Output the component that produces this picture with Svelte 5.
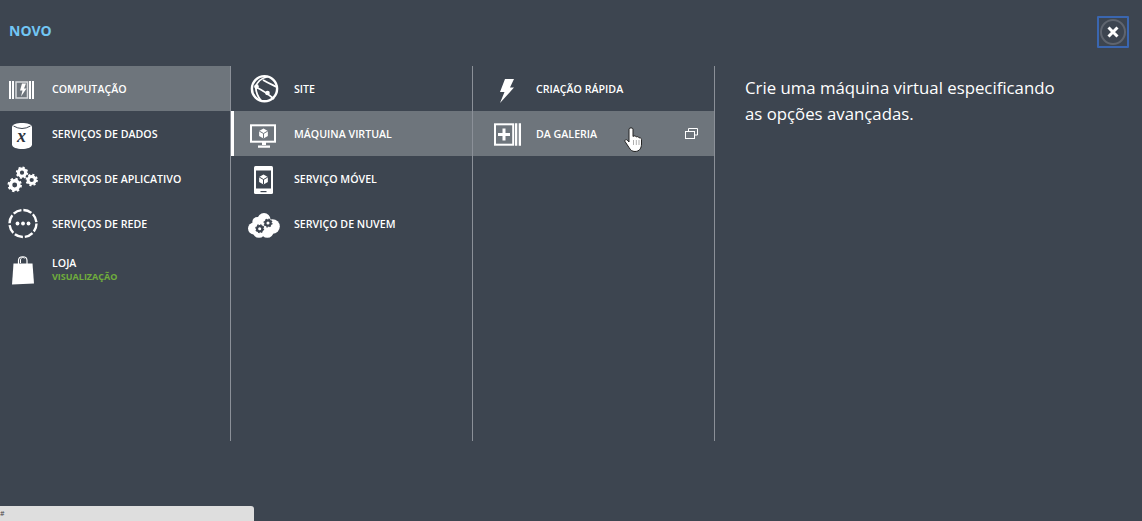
<script>
  const primary = [
    { icon: 'compute', label: 'COMPUTAÇÃO', active: true },
    { icon: 'data', label: 'SERVIÇOS DE DADOS' },
    { icon: 'gears', label: 'SERVIÇOS DE APLICATIVO' },
    { icon: 'network', label: 'SERVIÇOS DE REDE' },
    { icon: 'bag', label: 'LOJA', sub: 'VISUALIZAÇÃO' }
  ];
  const secondary = [
    { icon: 'globe', label: 'SITE' },
    { icon: 'monitor', label: 'MÁQUINA VIRTUAL', active: true },
    { icon: 'mobile', label: 'SERVIÇO MÓVEL' },
    { icon: 'cloud', label: 'SERVIÇO DE NUVEM' }
  ];
  const tertiary = [
    { icon: 'bolt', label: 'CRIAÇÃO RÁPIDA' },
    { icon: 'gallery', label: 'DA GALERIA', active: true, external: true }
  ];
</script>

{#snippet gear(x, y, r, color)}
  <circle cx={x} cy={y} r={r * 0.6} fill="none" stroke={color} stroke-width={r * 0.5} />
  <circle cx={x} cy={y} r={r * 0.88} fill="none" stroke={color} stroke-width={r * 0.3} stroke-dasharray={r * 0.345} />
{/snippet}

{#snippet cube(x, y, r, color, line)}
  <path d="M{x} {y - r}L{x + r * 0.87} {y - r / 2}V{y + r / 2}L{x} {y + r}L{x - r * 0.87} {y + r / 2}V{y - r / 2}Z" fill={color} />
  <path d="M{x - r * 0.87} {y - r / 2}L{x} {y}L{x + r * 0.87} {y - r / 2}M{x} {y}V{y + r}" fill="none" stroke={line} stroke-width="1" />
{/snippet}

{#snippet icon(name)}
  <svg class="icon" viewBox="0 0 44 45" width="44" height="45">
    {#if name === 'compute'}
      <path d="M9 15h2v18H9zM12 15h2v18h-2zM29 15h2v18h-2zM32 15h2v18h-2z" fill="#fff" />
      <rect x="16" y="16" width="11.5" height="16" fill="none" stroke="#d8dadd" stroke-width="1.5" />
      <path d="M22 17.5h4l-2 5h2.5l-5.5 8 1.500-6h-2.500z" fill="#fff" />
    {:else if name === 'data'}
      <path d="M12 16C12 10.500 32 10.500 32 16V33.500C32 39.500 12 39.500 12 33.500Z" fill="#fff" />
      <path d="M13.500 15Q22 20 30.500 15" fill="none" stroke="#3d4550" stroke-width="1" />
      <text class="x-glyph" x="21.500" y="31" text-anchor="middle">x</text>
    {:else if name === 'gears'}
      {@render gear(14.7, 29, 7, '#fff')}
      {@render gear(22, 16.7, 6, '#fff')}
      {@render gear(31.7, 24, 6, '#fff')}
    {:else if name === 'network'}
      <circle cx="23" cy="22.500" r="13.500" fill="none" stroke="#fff" stroke-width="2.400" stroke-dasharray="8.600 2" />
      <circle cx="17.500" cy="22.500" r="1.900" fill="#fff" />
      <circle cx="23" cy="22.500" r="1.900" fill="#fff" />
      <circle cx="28.500" cy="22.500" r="1.900" fill="#fff" />
    {:else if name === 'bag'}
      <path d="M13.500 17.500H32.500L34 37.500L12 38.500Z" fill="#fff" />
      <path d="M18.500 20V14.500C18.500 9.500 27 9.500 27 14.500V20" fill="none" stroke="#fff" stroke-width="1.200" />
      <path d="M20.500 17V14C20.500 11 24 11 24.500 12.500" fill="none" stroke="#fff" stroke-width="1" />
    {:else if name === 'globe'}
      <circle cx="22.500" cy="22.700" r="12.600" fill="none" stroke="#fff" stroke-width="2.400" />
      <path d="M26 10.500C20 12 15 16 13.700 21C14 26 16 31 19 34.500M13.700 21C18 23 23 25.500 32 33M21 14C26 17 31 19 35 21" fill="none" stroke="#fff" stroke-width="1.800" />
      <circle cx="14.500" cy="20.500" r="2.300" fill="#fff" />
      <circle cx="25.500" cy="27" r="2.300" fill="#fff" />
    {:else if name === 'monitor'}
      <rect x="9" y="14.300" width="24" height="16.400" fill="none" stroke="#fff" stroke-width="2" />
      <path d="M20 31h4v3h-4zM16 34.500h12v2.200H16z" fill="#fff" />
      {@render cube(21.5, 22.5, 5, '#fff', '#6e757c')}
    {:else if name === 'mobile'}
      <rect x="12" y="10" width="19" height="28" rx="1.500" fill="#fff" />
      <rect x="14" y="14.500" width="15" height="18" fill="#3d4550" />
      <rect x="18.500" y="35" width="6" height="1.200" fill="#3d4550" />
      {@render cube(21.5, 23.5, 5, '#fff', '#3d4550')}
    {:else if name === 'cloud'}
      <g fill="#fff">
        <circle cx="22" cy="18.500" r="6.500" />
        <circle cx="15.300" cy="21" r="5" />
        <circle cx="12" cy="27.500" r="6" />
        <circle cx="30.500" cy="25.500" r="7.300" />
        <circle cx="17" cy="30.500" r="6.300" />
        <circle cx="25.300" cy="30.500" r="6.300" />
      </g>
      {@render gear(17.7, 27.7, 4.4, '#3d4550')}
      {@render gear(26, 22, 4.4, '#3d4550')}
    {:else if name === 'bolt'}
      <path d="M21 13H30L26 21.500H30L16 37L20.500 26H16Z" fill="#fff" />
    {:else if name === 'gallery'}
      <rect x="11" y="13.300" width="18.200" height="20.400" fill="none" stroke="#fff" stroke-width="2" />
      <path d="M18.500 17.500h3v4.500h4.500v3h-4.500v4.500h-3v-4.500h-4.500v-3h4.500z" fill="#fff" />
      <path d="M31 12.300h2.300v22.400H31zM34.700 12.300H37v22.400h-2.300z" fill="#fff" />
    {/if}
  </svg>
{/snippet}

{#snippet row(item)}
  <div class="row" class:row--active={item.active}>
    {@render icon(item.icon)}
    <div class="row__text">
      <span class="row__label">{item.label}</span>
      {#if item.sub}<span class="row__sub">{item.sub}</span>{/if}
    </div>
    {#if item.external}
      <svg class="external" viewBox="0 0 13 11" width="13" height="11">
        <path d="M3.500 3V.5h9v6.500H9.500" fill="none" stroke="#fff" />
        <rect x=".5" y="3.500" width="9" height="7" fill="none" stroke="#fff" />
      </svg>
    {/if}
  </div>
{/snippet}

<div class="wizard">
  <header class="wizard__head">
    <h1 class="wizard__title">NOVO</h1>
    <button class="close" aria-label="Fechar">
      <svg viewBox="0 0 26 26" width="26" height="26">
        <circle cx="13" cy="13" r="12" fill="none" stroke="#5f656f" stroke-width="2" />
        <path d="M8.500 8.500l9 9M17.500 8.500l-9 9" stroke="#fff" stroke-width="3" />
      </svg>
    </button>
  </header>

  <div class="cols">
    <nav class="col col--primary">
      {#each primary as item}{@render row(item)}{/each}
    </nav>
    <nav class="col col--inner">
      {#each secondary as item}{@render row(item)}{/each}
    </nav>
    <nav class="col col--inner">
      {#each tertiary as item}{@render row(item)}{/each}
    </nav>
    <p class="desc">Crie uma máquina virtual especificando as opções avançadas.</p>
  </div>

  <!-- mouse pointer in the shot -->
  <svg class="pointer" viewBox="0 0 18 25" width="18" height="25">
    <path d="M5 2C5 .5 9 .5 9 2V9.500C10 8.500 12 8.500 12.300 10C13 9.300 15 9.500 15.200 11C16 10.500 17.500 11 17.500 12.500V17C17.500 21 15.500 24.500 11 24.500C8 24.500 6.500 23 5 20.500L1 14.500C.5 13 2 12 3.200 13L5 15Z" fill="#fff" stroke="#222" stroke-width="1" stroke-linejoin="round" />
    <path d="M9.500 13v5M12.300 13v5M15 13v5" stroke="#777" stroke-width=".6" />
  </svg>

  <div class="status"><span>#</span></div>
</div>

<style>
  :global(body) {
    margin: 0;
    background: #3d4550;
  }

  .wizard {
    position: relative;
    height: 521px;
    overflow: hidden;
    background: #3d4550;
    color: #fff;
    font-family: "Open Sans", "Noto Sans", sans-serif;
  }

  .wizard__head {
    height: 66px;
    display: flex;
    align-items: flex-start;
    justify-content: space-between;
    padding: 16px 13px 0 9px;
    box-sizing: border-box;
  }

  .wizard__title {
    margin: 7px 0 0;
    font-size: 14px;
    line-height: 16px;
    font-weight: 700;
    color: #72c6f5;
  }

  .close {
    width: 32px;
    height: 32px;
    padding: 0;
    display: flex;
    align-items: center;
    justify-content: center;
    background: none;
    border: 2px solid #3a66b0;
    border-radius: 1px;
    box-sizing: border-box;
  }

  .cols {
    display: flex;
    height: 375px;
  }

  .col {
    flex: none;
    width: 242px;
    box-sizing: border-box;
    border-right: 1px solid #8b9098;
  }

  .col--primary { width: 231px; }
  .col--inner .row { padding-left: 11px; }
  .col--inner .row--active { box-shadow: inset 3px 0 0 #fff; }
  .col--inner + .col--inner .row--active { box-shadow: none; }

  .row {
    height: 45px;
    display: flex;
    align-items: center;
    padding-right: 16px;
    box-sizing: border-box;
  }

  .row--active { background: #6e757c; }

  .icon {
    flex: none;
    margin-right: 8px;
  }

  .x-glyph {
    font-family: "Liberation Serif", serif;
    font-style: italic;
    font-weight: 700;
    font-size: 18px;
    fill: #2d333d;
  }

  .row__text {
    flex: 1;
    display: flex;
    flex-direction: column;
    padding-top: 2px;
  }

  .row__label {
    font-size: 10.65px;
    line-height: 13px;
    font-weight: 600;
    white-space: nowrap;
  }

  .row__sub {
    font-size: 9px;
    line-height: 13px;
    font-weight: 700;
    color: #70ad3c;
  }

  .external { flex: none; }

  .desc {
    width: 320px;
    margin: 9px 0 0 30px;
    font-size: 16.8px;
    line-height: 26px;
  }

  .pointer {
    position: absolute;
    left: 624px;
    top: 127px;
  }

  .status {
    position: absolute;
    left: 0;
    bottom: 0;
    width: 254px;
    height: 15px;
    overflow: hidden;
    background: #dedede;
    border-top-right-radius: 3px;
    color: #444;
    font-size: 7px;
    line-height: 15px;
  }
</style>
